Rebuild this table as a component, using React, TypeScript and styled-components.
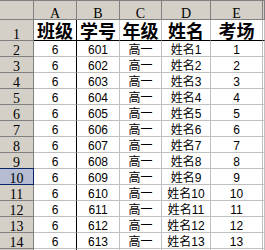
import { FC } from 'react'
import styled, { createGlobalStyle } from 'styled-components'

const headerBg = '#d4d0c8'
const headerLine = '#808080'
const gridLine = '#c0c0c0'
const edgeLine = '#000000'

const GlobalStyle = createGlobalStyle`
  html, body {
    margin: 0;
    padding: 0;
    background: #fff;
    overflow: hidden;
  }
`

const Sheet = styled.div`
  display: grid;
  grid-template-columns: 34px 43px 43px 42px 49px 52px 1fr;
  grid-template-rows: 19px 21px;
  grid-auto-rows: 16px;
  width: 265px;
  height: 250px;
  overflow: hidden;
  border-top: 1px solid ${headerLine};
  box-sizing: border-box;
`

const HeadBase = styled.div`
  box-sizing: border-box;
  background: ${headerBg};
  border-right: 1px solid ${headerLine};
  border-bottom: 1px solid ${headerLine};
  display: flex;
  justify-content: center;
  align-items: flex-end;
  font-family: 'Liberation Serif', 'DejaVu Serif', serif;
  font-size: 14px;
  line-height: 11px;
  color: #000;
`

const Corner = styled(HeadBase)``

const ColHead = styled(HeadBase)``

const RowHead = styled(HeadBase)<{ $active?: boolean }>`
  ${({ $active }) => $active && `
    background: #b6bdd2;
    border-right-color: #0a246a;
    border-bottom-color: #0a246a;
    box-shadow: 0 -1px 0 #0a246a;
  `}
`

const Cell = styled.div<{ $edgeRight?: boolean; $edgeBottom?: boolean }>`
  box-sizing: border-box;
  background: #fff;
  border-right: 1px solid ${({ $edgeRight }) => ($edgeRight ? edgeLine : gridLine)};
  border-bottom: 1px solid ${({ $edgeBottom }) => ($edgeBottom ? edgeLine : gridLine)};
  display: flex;
  justify-content: center;
  align-items: flex-end;
  font-family: 'Liberation Sans', 'Noto Sans CJK SC', sans-serif;
  font-size: 12px;
  line-height: 12px;
  color: #000;
  white-space: nowrap;
`

const TitleCell = styled(Cell)`
  align-items: center;
  font-family: 'Noto Sans CJK SC', sans-serif;
  font-size: 18px;
  font-weight: 700;
  line-height: 20px;
`

// F only shows its first pixels at the right edge, so no letter
const columns = ['A', 'B', 'C', 'D', 'E', '']
const titles = ['班级', '学号', '年级', '姓名', '考场', '']

const students = Array.from({ length: 13 }, (_, i) => [
  '6',
  String(601 + i),
  '高一',
  `姓名${i + 1}`,
  String(i + 1),
  '',
])

const activeRow = 10

const Row: FC<{ num: number; values: string[] }> = ({ num, values }) => (
  <>
    <RowHead $active={num === activeRow}>{num}</RowHead>
    {values.map((v, i) => (
      <Cell key={i} $edgeRight={i === 0}>
        {v}
      </Cell>
    ))}
  </>
)

const App: FC = () => (
  <>
    <GlobalStyle />
    <Sheet>
      <Corner />
      {columns.map((c, i) => (
        <ColHead key={i}>{c}</ColHead>
      ))}

      <RowHead>1</RowHead>
      {titles.map((t, i) => (
        <TitleCell key={i} $edgeRight={i === 0} $edgeBottom>
          {t}
        </TitleCell>
      ))}

      {students.map((row, r) => (
        <Row key={r} num={r + 2} values={row} />
      ))}
      <Row num={15} values={['', '', '', '', '', '']} />
    </Sheet>
  </>
)

export default App
